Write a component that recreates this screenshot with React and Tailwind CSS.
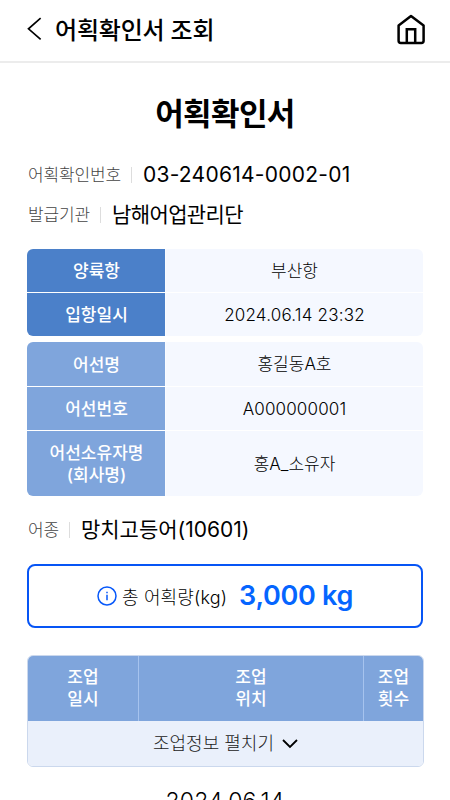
const portRows = [
  { label: '양륙항', value: '부산항', valueClass: 'font-light' },
  { label: '입항일시', value: '2024.06.14 23:32', valueClass: 'font-[350] tracking-[0.2px]' },
]

const vesselRows = [
  { label: '어선명', value: '홍길동A호', height: 'h-11', valueClass: 'font-light' },
  { label: '어선번호', value: 'A000000001', height: 'h-[43px]', valueClass: 'font-[350] tracking-[0.15px]' },
  { label: '어선소유자명\n(회사명)', value: '홍A_소유자', height: 'h-[65px]', valueClass: 'font-light' },
]

function Header() {
  return (
    <header className="flex h-[63px] items-center border-b-2 border-[#ececec] pl-[27px] pr-[22px] pb-1">
      <svg width="15" height="26" viewBox="0 0 15 26" fill="none" stroke="#000" strokeWidth="1.7" strokeLinecap="square" strokeLinejoin="miter">
        <path d="M13 2.7 1.5 12.8 13 22.9" />
      </svg>
      <h1 className="ml-[13px] flex-1 pt-[5px] text-[24px] font-medium tracking-[-0.2px]">어획확인서 조회</h1>
      <svg width="32" height="32" viewBox="0 0 32 32" fill="none" stroke="#000" strokeWidth="2.5" strokeLinejoin="round">
        <path d="M2.6 12.4 15 3l12.6 9.4v15.3a2.2 2.2 0 0 1-2.2 2.2H4.8a2.2 2.2 0 0 1-2.2-2.2z" />
        <path d="M10.8 29.8V16.2h8.4v13.6" strokeLinejoin="miter" />
      </svg>
    </header>
  )
}

function InfoLine({ label, value, className, valueClass }) {
  return (
    <div className={`flex items-center pl-px whitespace-nowrap ${className}`}>
      <span className="pt-px text-[17px] font-light tracking-[-0.15px] text-[#444]">{label}</span>
      <span className="mr-[11px] ml-[10px] h-4 w-px bg-[#ddd]" />
      <span className={valueClass}>{value}</span>
    </div>
  )
}

export default function App() {
  return (
    <div className="h-[800px] overflow-hidden bg-white font-['Inter','Noto_Sans_CJK_KR',sans-serif] text-black">
      <Header />
      <main className="px-[27px]">
        <h2 className="mt-[28px] text-center text-[31px] leading-[46px] font-bold tracking-[-0.6px]">어획확인서</h2>
        <InfoLine label="어획확인번호" value="03-240614-0002-01" className="mt-[18px] h-10" valueClass="text-[21px] tracking-[0.25px]" />
        <InfoLine label="발급기관" value="남해어업관리단" className="h-10" valueClass="text-[21px] tracking-[-0.6px]" />

        <div className="mt-[14px] flex flex-col gap-px overflow-hidden rounded-md text-[17px]">
          {portRows.map((row) => (
            <div key={row.label} className="flex h-[43px]">
              <div className="flex w-[138px] items-center justify-center bg-[#4b80c9] pt-[3px] pl-px font-medium text-white">{row.label}</div>
              <div className={`flex flex-1 items-center justify-center border-l border-[#fafcff] bg-[#f5f8ff] pt-[3px] ${row.valueClass}`}>{row.value}</div>
            </div>
          ))}
        </div>
        <div className="mt-[6px] flex flex-col gap-px overflow-hidden rounded-md text-[17px]">
          {vesselRows.map((row) => (
            <div key={row.label} className={`flex ${row.height}`}>
              <div className="flex w-[138px] items-center justify-center whitespace-pre-line bg-[#7fa5dc] pt-px pl-px text-center leading-[22px] font-medium text-white">{row.label}</div>
              <div className={`flex flex-1 items-center justify-center border-l border-[#fafcff] bg-[#f5f8ff] pt-0.5 ${row.valueClass}`}>{row.value}</div>
            </div>
          ))}
        </div>

        <InfoLine label="어종" value="망치고등어(10601)" className="mt-[14px] h-10" valueClass="text-[21px]" />
        <div className="mt-[14px] flex h-16 items-center justify-center rounded-lg border-2 border-[#0755f5]">
          <svg width="20" height="20" viewBox="0 0 20 20" fill="none" stroke="#0758fa" strokeWidth="1.5">
            <circle cx="10" cy="10" r="9" />
            <path d="M10 8.8v5.4M10 5.7v1.5" />
          </svg>
          <span className="ml-[5px] pt-0.5 text-[18px] font-light tracking-[0.15px]">총 어획량(kg)</span>
          <strong className="ml-3 pt-px text-[27px] font-semibold tracking-[-0.3px] text-[#0565ff]">3,000 kg</strong>
        </div>

        <div className="mt-[27px] -mr-px h-[112px] overflow-hidden rounded-md border border-[#cbd8ed] text-[17px]">
          <div className="flex h-[65px] bg-[#7fa5dc] text-center leading-[22px] font-medium text-white">
            <div className="flex w-[111px] items-center justify-center border-r border-[#a6c3ee] pb-px">조업<br />일시</div>
            <div className="flex flex-1 items-center justify-center border-r border-[#a6c3ee] pb-px">조업<br />위치</div>
            <div className="flex w-[59px] items-center justify-center pb-px">조업<br />횟수</div>
          </div>
          <div className="flex h-[45px] items-center justify-center gap-2 bg-[#eaf0fb] text-[18px] font-light text-[#222]">
            조업정보 펼치기
            <svg width="16" height="10" viewBox="0 0 16 10" fill="none" stroke="#000" strokeWidth="1.8">
              <path d="m1 1 7 7 7-7" />
            </svg>
          </div>
        </div>
        <p className="mt-[17px] text-center text-[23px] font-light tracking-[0.2px]">2024.06.14</p>
      </main>
    </div>
  )
}
